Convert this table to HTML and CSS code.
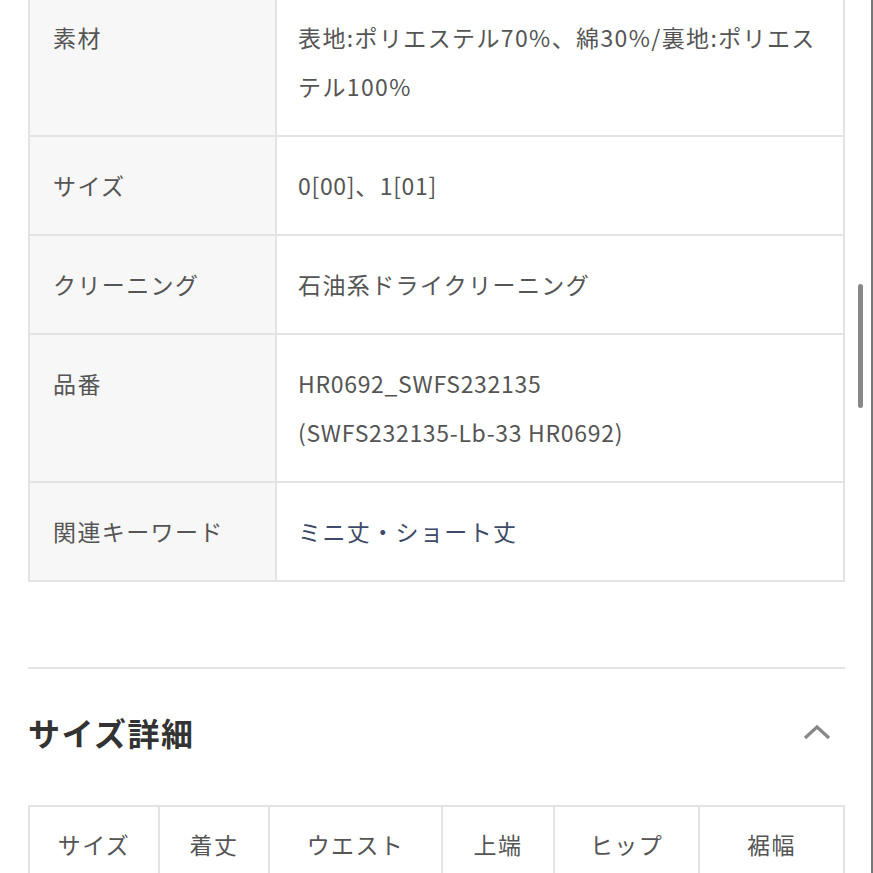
FILE: index.html
```html
<!DOCTYPE html>
<html lang="ja">
<head>
  <meta charset="UTF-8" />
  <meta name="viewport" content="width=device-width, initial-scale=1.0"/>
  <title>商品詳細</title>
  <link rel="stylesheet" href="styles.css">
</head>
<body>

<div class="page">
  <table class="spec-table">
    <tr>
      <th>素材</th>
      <td>表地:ポリエステル70%、綿30%/裏地:ポリエステル100%</td>
    </tr>
    <tr>
      <th>サイズ</th>
      <td><span class="latin">0[00]</span>、<span class="latin">1[01]</span></td>
    </tr>
    <tr>
      <th>クリーニング</th>
      <td>石油系ドライクリーニング</td>
    </tr>
    <tr>
      <th>品番</th>
      <td class="latin">HR0692_SWFS232135<br>(SWFS232135-Lb-33 HR0692)</td>
    </tr>
    <tr>
      <th>関連キーワード</th>
      <td><a class="keyword" href="#">ミニ丈・ショート丈</a></td>
    </tr>
  </table>

  <div class="section">
    <div class="section-head">
      <h2>サイズ詳細</h2>
      <svg class="chevron" width="28" height="16" viewBox="0 0 28 16">
        <polyline points="2,14 14,3 26,14" fill="none" stroke="#888" stroke-width="3.2"/>
      </svg>
    </div>

    <table class="size-table">
      <tr>
        <th class="c-size">サイズ</th>
        <th class="c-length">着丈</th>
        <th class="c-waist">ウエスト</th>
        <th class="c-top">上端</th>
        <th class="c-hip">ヒップ</th>
        <th class="c-hem">裾幅</th>
      </tr>
    </table>
  </div>
</div>

<div class="scrollbar"></div>

</body>
</html>
```

FILE: styles.css
```css
body {
  margin: 0;
  font-family: "Noto Sans CJK JP", "Noto Sans", sans-serif;
  color: #555;
  background: #fff;
  overflow: hidden;
}
.page {
  padding: 0 26px 0 28px;
  margin-top: -13px;
  border-right: 2px solid #777;
  min-height: 900px;
}
.spec-table {
  width: 100%;
  border-collapse: collapse;
  font-size: 23px;
  line-height: 49px;
  letter-spacing: 0.06em;
}
.spec-table th,
.spec-table td {
  border: 2px solid #e3e3e3;
  padding: 24px 22px 24px 23px;
  text-align: left;
  vertical-align: top;
  font-weight: normal;
}
.spec-table th {
  width: 200px;
  background-color: #f7f7f7;
}
.spec-table td {
  padding-left: 21px;
  background-color: #fff;
}
.latin {
  letter-spacing: 0.03em;
}
.keyword {
  color: #3d4a68;
  text-decoration: none;
}
.section {
  margin-top: 85px;
  border-top: 2px solid #e3e3e3;
}
.section-head {
  display: flex;
  align-items: center;
  justify-content: space-between;
  padding: 40px 14px 0 0;
}
.section-head h2 {
  margin: 0;
  font-size: 32px;
  line-height: 46px;
  font-weight: 700;
  color: #333;
  letter-spacing: 1.5px;
}
.size-table {
  width: 100%;
  table-layout: fixed;
  margin-top: 50px;
  border-collapse: collapse;
  font-size: 23px;
  line-height: 50px;
  letter-spacing: 0.06em;
  text-align: center;
}
.size-table th {
  box-sizing: border-box;
  border: 2px solid #e3e3e3;
  padding: 12px 0 30px;
  font-weight: normal;
}
.c-size { width: 130px; }
.c-length { width: 110px; }
.c-waist { width: 173px; }
.c-top { width: 112px; }
.c-hip { width: 145px; }
.scrollbar {
  position: fixed;
  left: 858px;
  top: 284px;
  width: 5px;
  height: 124px;
  border-radius: 3px;
  background-color: #888;
}
```
